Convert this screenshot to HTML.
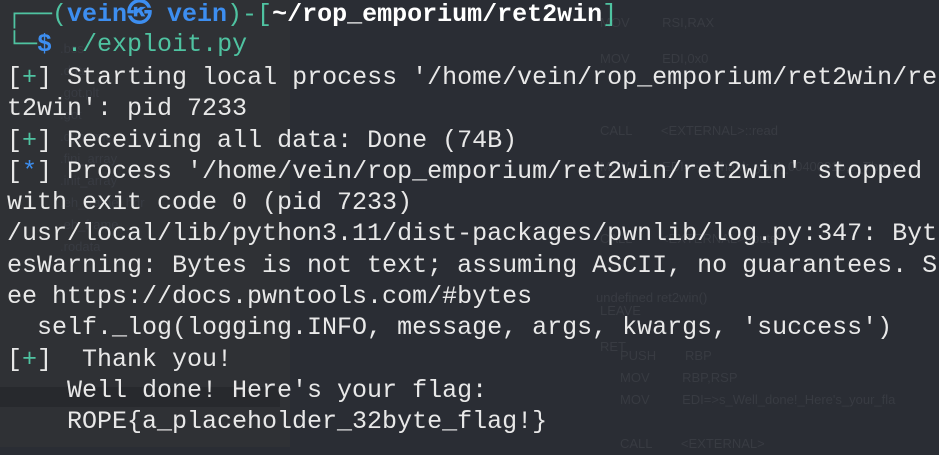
<!DOCTYPE html>
<html><head><meta charset="utf-8"><style>
html,body{margin:0;padding:0;}
body{width:939px;height:447px;overflow:hidden;background:#2a2d34;position:relative;font-family:"Liberation Mono",monospace;}
.side{position:absolute;left:0;top:0;width:290px;height:447px;background:#2f3135;}
.bg{position:absolute;font-family:"Liberation Sans",sans-serif;font-size:13px;color:#383b42;white-space:pre;}
.hl{position:absolute;left:0;top:387px;width:280px;height:20px;background:#27292d;}
.term{position:absolute;left:7px;font-size:25px;line-height:31.3px;color:#e8e8e8;white-space:pre;}
.g{color:#4fc3a1}.b{color:#3d8ef0;font-weight:bold}.w{color:#fff;font-weight:bold}
</style></head><body>
<div class="side"></div>
<div class="hl"></div>
<div class="bg" style="left:60px;top:38px;line-height:22px">.bss
.data
.got.plt
.got
.dynamic
.fini_array
.init_array
.eh_frame_hdr
.eh_frame
.rodata</div>
<div class="bg" style="left:600px;top:5px;line-height:36px">MOV         RSI,RAX
MOV         EDI,0x0

CALL        &lt;EXTERNAL&gt;::read
MOV         EDI=&gt;s_Thank_you!_0040091b,s_Thank

CALL        &lt;EXTERNAL&gt;::puts

LEAVE
RET</div>
<div class="bg" style="left:596px;top:290px">undefined ret2win()</div>
<div class="bg" style="left:620px;top:345px;line-height:22px">PUSH        RBP
MOV         RBP,RSP
MOV         EDI=&gt;s_Well_done!_Here's_your_fla

CALL        &lt;EXTERNAL&gt;</div>
<div class="term" style="top:0;line-height:30px"><span class="g">┌──(</span><span class="b">vein㉿ vein</span><span class="g">)-[</span><span class="w">~/rop_emporium/ret2win</span><span class="g">]</span>
<span class="g">└─</span><span class="b">$</span> <span class="g">./exploit.py</span></div>
<div class="term" style="top:62px">[<span class="g">+</span>] Starting local process '/home/vein/rop_emporium/ret2win/re
t2win': pid 7233
[<span class="g">+</span>] Receiving all data: Done (74B)
[<span class="b" style="font-weight:normal">*</span>] Process '/home/vein/rop_emporium/ret2win/ret2win' stopped
with exit code 0 (pid 7233)
/usr/local/lib/python3.11/dist-packages/pwnlib/log.py:347: Byt
esWarning: Bytes is not text; assuming ASCII, no guarantees. S
ee https://docs.pwntools.com/#bytes
  self._log(logging.INFO, message, args, kwargs, 'success')
[<span class="g">+</span>]  Thank you!
    Well done! Here's your flag:
    ROPE{a_placeholder_32byte_flag!}</div>
</body></html>
